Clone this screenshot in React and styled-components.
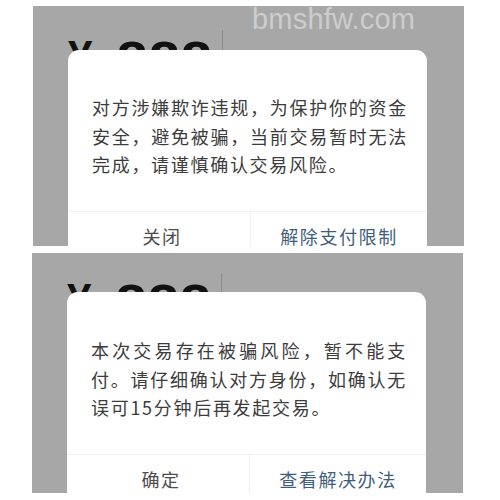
import React from "react";
import styled, { createGlobalStyle } from "styled-components";

const Global = createGlobalStyle`
  html, body { margin: 0; padding: 0; background: #ffffff; }
  body { font-family: "Noto Sans CJK SC", "Noto Sans", sans-serif; }
`;

const Page = styled.div`
  width: 500px;
  height: 500px;
  box-sizing: border-box;
  padding: 6px 0 0 33px;
  display: flex;
  flex-direction: column;
  gap: 7px;
  background: #ffffff;
`;

const Shot = styled.div`
  position: relative;
  width: 431px;
  height: 240px;
  margin-left: ${(p) => p.$shift || 0}px;
  background: #a7a7a7;
  overflow: hidden;
`;

const Behind = styled.div`
  display: flex;
  align-items: flex-start;
  padding: ${(p) => p.$top}px 0 0 35px;
`;

const Amount = styled.div`
  display: flex;
  align-items: flex-start;
  gap: 24px;
  margin-top: 3px;
  font-family: "Liberation Sans", Arial, sans-serif;
  font-weight: 700;
  color: #111;
  line-height: 1;
`;

const Currency = styled.span`
  font-size: 44px;
  margin-top: 2px;
`;

const Digits = styled.span`
  font-size: 56px;
  letter-spacing: 1px;
`;

const Separator = styled.div`
  width: 1px;
  height: 40px;
  margin-left: 9px;
  background: #8c8c8c;
`;

const Watermark = styled.div`
  position: absolute;
  top: -1px;
  left: 219px;
  font-family: "Liberation Sans", Arial, sans-serif;
  font-size: 29px;
  line-height: 1;
  color: #cdcdcd;
  letter-spacing: 0.2px;
`;

const Dialog = styled.div`
  position: absolute;
  left: 35px;
  top: ${(p) => p.$top}px;
  width: 359px;
  height: 260px;
  background: #ffffff;
  border-radius: 11px;
  display: flex;
  flex-direction: column;
`;

const Message = styled.p`
  margin: 0;
  padding: ${(p) => p.$top}px 19px 32px 24px;
  font-size: 18px;
  line-height: 28.5px;
  letter-spacing: 1.7px;
  color: #3c3c3c;
  text-align: justify;
  text-align-last: left;
  line-break: strict;
`;

const ButtonRow = styled.div`
  display: flex;
  padding-left: 6px;
  border-top: 1px solid #f0f0f0;
`;

const Button = styled.div`
  flex: 1;
  height: 49px;
  display: flex;
  align-items: center;
  justify-content: center;
  font-size: 18px;
  letter-spacing: 1.6px;
  color: ${(p) => (p.$primary ? "#3f5e7e" : "#4c4c4c")};
  & + & {
    border-left: 1px solid #f0f0f0;
  }
`;

function Panel({ shift, behindTop, dialogTop, textTop, watermark, text, left, right }) {
  return (
    <Shot $shift={shift}>
      <Behind $top={behindTop}>
        <Amount>
          <Currency>¥</Currency>
          <Digits>888</Digits>
        </Amount>
        <Separator />
      </Behind>
      {watermark && <Watermark>bmshfw.com</Watermark>}
      <Dialog $top={dialogTop}>
        <Message $top={textTop}>{text}</Message>
        <ButtonRow>
          <Button>{left}</Button>
          <Button $primary>{right}</Button>
        </ButtonRow>
      </Dialog>
    </Shot>
  );
}

export default function App() {
  return (
    <>
      <Global />
      <Page>
        <Panel
          shift={0}
          behindTop={24}
          dialogTop={44}
          textTop={43}
          watermark
          text="对方涉嫌欺诈违规，为保护你的资金安全，避免被骗，当前交易暂时无法完成，请谨慎确认交易风险。"
          left="关闭"
          right="解除支付限制"
        />
        <Panel
          shift={-1}
          behindTop={20}
          dialogTop={39}
          textTop={44}
          text="本次交易存在被骗风险，暂不能支付。请仔细确认对方身份，如确认无误可15分钟后再发起交易。"
          left="确定"
          right="查看解决办法"
        />
      </Page>
    </>
  );
}
